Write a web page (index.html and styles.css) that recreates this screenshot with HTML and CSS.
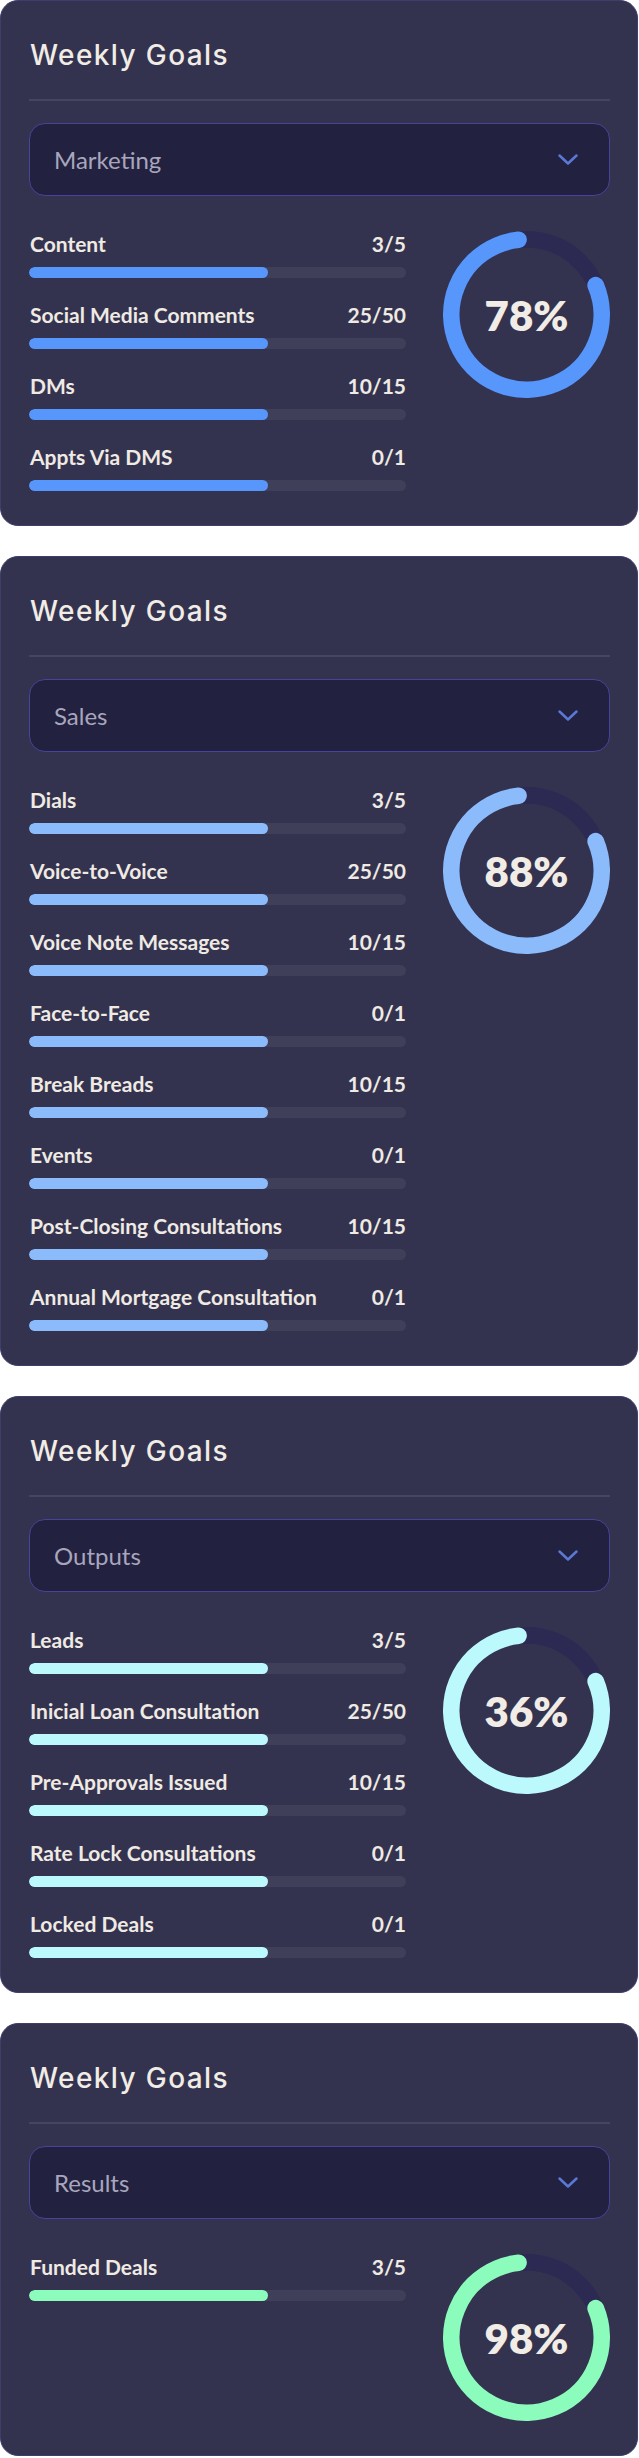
FILE: index.html
```html
<!DOCTYPE html>
<html lang="en">
<head>
<meta charset="utf-8">
<title>Weekly Goals</title>
<link rel="stylesheet" href="styles.css">
</head>
<body>
<main class="page">

  <section class="card card--marketing">
    <h2 class="card-title">Weekly Goals</h2>
    <hr class="divider">
    <div class="select">
      <span class="select-label">Marketing</span>
      <svg class="chevron" viewBox="0 0 20 11" width="20" height="11" aria-hidden="true"><polyline points="1.5,1.5 10,9.5 18.5,1.5"/></svg>
    </div>
    <div class="card-body">
      <ul class="goals">
        <li class="goal"><div class="goal-head"><span>Content</span><span>3/5</span></div><div class="bar"><div class="bar-fill"></div></div></li>
        <li class="goal"><div class="goal-head"><span>Social Media Comments</span><span>25/50</span></div><div class="bar"><div class="bar-fill"></div></div></li>
        <li class="goal"><div class="goal-head"><span>DMs</span><span>10/15</span></div><div class="bar"><div class="bar-fill"></div></div></li>
        <li class="goal"><div class="goal-head"><span>Appts Via DMS</span><span>0/1</span></div><div class="bar"><div class="bar-fill"></div></div></li>
      </ul>
      <div class="ring">
        <svg class="ring-svg" viewBox="0 0 167 167" width="167" height="167" aria-hidden="true">
          <circle class="ring-track" cx="83.5" cy="83.5" r="75.15"/>
          <circle class="ring-arc" cx="83.5" cy="83.5" r="75.15" transform="rotate(-23 83.5 83.5)"/>
        </svg>
        <span class="ring-value">78%</span>
      </div>
    </div>
  </section>

  <section class="card card--sales">
    <h2 class="card-title">Weekly Goals</h2>
    <hr class="divider">
    <div class="select">
      <span class="select-label">Sales</span>
      <svg class="chevron" viewBox="0 0 20 11" width="20" height="11" aria-hidden="true"><polyline points="1.5,1.5 10,9.5 18.5,1.5"/></svg>
    </div>
    <div class="card-body">
      <ul class="goals">
        <li class="goal"><div class="goal-head"><span>Dials</span><span>3/5</span></div><div class="bar"><div class="bar-fill"></div></div></li>
        <li class="goal"><div class="goal-head"><span>Voice-to-Voice</span><span>25/50</span></div><div class="bar"><div class="bar-fill"></div></div></li>
        <li class="goal"><div class="goal-head"><span>Voice Note Messages</span><span>10/15</span></div><div class="bar"><div class="bar-fill"></div></div></li>
        <li class="goal"><div class="goal-head"><span>Face-to-Face</span><span>0/1</span></div><div class="bar"><div class="bar-fill"></div></div></li>
        <li class="goal"><div class="goal-head"><span>Break Breads</span><span>10/15</span></div><div class="bar"><div class="bar-fill"></div></div></li>
        <li class="goal"><div class="goal-head"><span>Events</span><span>0/1</span></div><div class="bar"><div class="bar-fill"></div></div></li>
        <li class="goal"><div class="goal-head"><span>Post-Closing Consultations</span><span>10/15</span></div><div class="bar"><div class="bar-fill"></div></div></li>
        <li class="goal"><div class="goal-head"><span>Annual Mortgage Consultation</span><span>0/1</span></div><div class="bar"><div class="bar-fill"></div></div></li>
      </ul>
      <div class="ring">
        <svg class="ring-svg" viewBox="0 0 167 167" width="167" height="167" aria-hidden="true">
          <circle class="ring-track" cx="83.5" cy="83.5" r="75.15"/>
          <circle class="ring-arc" cx="83.5" cy="83.5" r="75.15" transform="rotate(-23 83.5 83.5)"/>
        </svg>
        <span class="ring-value">88%</span>
      </div>
    </div>
  </section>

  <section class="card card--outputs">
    <h2 class="card-title">Weekly Goals</h2>
    <hr class="divider">
    <div class="select">
      <span class="select-label">Outputs</span>
      <svg class="chevron" viewBox="0 0 20 11" width="20" height="11" aria-hidden="true"><polyline points="1.5,1.5 10,9.5 18.5,1.5"/></svg>
    </div>
    <div class="card-body">
      <ul class="goals">
        <li class="goal"><div class="goal-head"><span>Leads</span><span>3/5</span></div><div class="bar"><div class="bar-fill"></div></div></li>
        <li class="goal"><div class="goal-head"><span>Inicial Loan Consultation</span><span>25/50</span></div><div class="bar"><div class="bar-fill"></div></div></li>
        <li class="goal"><div class="goal-head"><span>Pre-Approvals Issued</span><span>10/15</span></div><div class="bar"><div class="bar-fill"></div></div></li>
        <li class="goal"><div class="goal-head"><span>Rate Lock Consultations</span><span>0/1</span></div><div class="bar"><div class="bar-fill"></div></div></li>
        <li class="goal"><div class="goal-head"><span>Locked Deals</span><span>0/1</span></div><div class="bar"><div class="bar-fill"></div></div></li>
      </ul>
      <div class="ring">
        <svg class="ring-svg" viewBox="0 0 167 167" width="167" height="167" aria-hidden="true">
          <circle class="ring-track" cx="83.5" cy="83.5" r="75.15"/>
          <circle class="ring-arc" cx="83.5" cy="83.5" r="75.15" transform="rotate(-23 83.5 83.5)"/>
        </svg>
        <span class="ring-value">36%</span>
      </div>
    </div>
  </section>

  <section class="card card--results">
    <h2 class="card-title">Weekly Goals</h2>
    <hr class="divider">
    <div class="select">
      <span class="select-label">Results</span>
      <svg class="chevron" viewBox="0 0 20 11" width="20" height="11" aria-hidden="true"><polyline points="1.5,1.5 10,9.5 18.5,1.5"/></svg>
    </div>
    <div class="card-body">
      <ul class="goals">
        <li class="goal"><div class="goal-head"><span>Funded Deals</span><span>3/5</span></div><div class="bar"><div class="bar-fill"></div></div></li>
      </ul>
      <div class="ring">
        <svg class="ring-svg" viewBox="0 0 167 167" width="167" height="167" aria-hidden="true">
          <circle class="ring-track" cx="83.5" cy="83.5" r="75.15"/>
          <circle class="ring-arc" cx="83.5" cy="83.5" r="75.15" transform="rotate(-23 83.5 83.5)"/>
        </svg>
        <span class="ring-value">98%</span>
      </div>
    </div>
  </section>

</main>
</body>
</html>
```
FILE: styles.css
```css
* {
  box-sizing: border-box;
}

html,
body {
  margin: 0;
  padding: 0;
  background: #ffffff;
}

body {
  font-family: "Lato", "Liberation Sans", sans-serif;
  color: #efeae3;
}

.page {
  display: flex;
  flex-direction: column;
  gap: 30px;
  width: 638px;
}

.card {
  --accent: #5797fc;
  background: #34334f;
  border: 1px solid #3f3d6c;
  border-radius: 18px;
  padding: 34px 27px 34px 28px;
}

.card--marketing { --accent: #5797fc; }
.card--sales { --accent: #8cbbfc; }
.card--outputs { --accent: #bcf9fd; }
.card--results { --accent: #8cfcbd; }

.card-title {
  margin: 0;
  font-family: "Inter", "Liberation Sans", sans-serif;
  font-weight: 500;
  font-size: 28px;
  line-height: 40px;
  letter-spacing: 1.4px;
  color: #f1ece5;
  padding-left: 1px;
}

.divider {
  margin: 24px 0 0 0;
  border: 0;
  height: 2px;
  background: #46455f;
}

.select {
  margin-top: 22px;
  height: 73px;
  display: flex;
  align-items: center;
  justify-content: space-between;
  padding: 0 31px 0 24px;
  background: #22213f;
  border: 1.5px solid #47449a;
  border-radius: 16px;
}

.select-label {
  font-size: 24px;
  font-weight: 400;
  color: #a8a6bd;
  line-height: 30px;
}

.chevron {
  display: block;
  fill: none;
  stroke: #5a78d4;
  stroke-width: 2.5;
  stroke-linecap: round;
  stroke-linejoin: round;
}

.card-body {
  margin-top: 35px;
  display: flex;
  align-items: flex-start;
  justify-content: space-between;
}

.goals {
  list-style: none;
  margin: 0;
  padding: 0;
  width: 377px;
  display: flex;
  flex-direction: column;
  gap: 24px;
}

.goal-head {
  display: flex;
  justify-content: space-between;
  font-size: 21px;
  font-weight: 700;
  line-height: 25px;
  color: #efeae3;
  padding-left: 1px;
}

.bar {
  margin-top: 10.5px;
  height: 11.5px;
  border-radius: 6px;
  background: #403f59;
  overflow: hidden;
}

.bar-fill {
  width: 63.5%;
  height: 100%;
  border-radius: 6px;
  background: var(--accent);
}

.ring {
  width: 167px;
  height: 167px;
  display: grid;
  place-items: center;
}

.ring-svg,
.ring-value {
  grid-area: 1 / 1;
}

.ring-svg {
  display: block;
}

.ring-track {
  fill: none;
  stroke: #2c2a52;
  stroke-width: 16.7;
}

.ring-arc {
  fill: none;
  stroke: var(--accent);
  stroke-width: 16.7;
  stroke-linecap: round;
  stroke-dasharray: 375.8 472.2;
}

.ring-value {
  font-size: 42px;
  font-weight: 800;
  line-height: 42px;
  color: #f1ece5;
  padding-top: 1px;
}
```
